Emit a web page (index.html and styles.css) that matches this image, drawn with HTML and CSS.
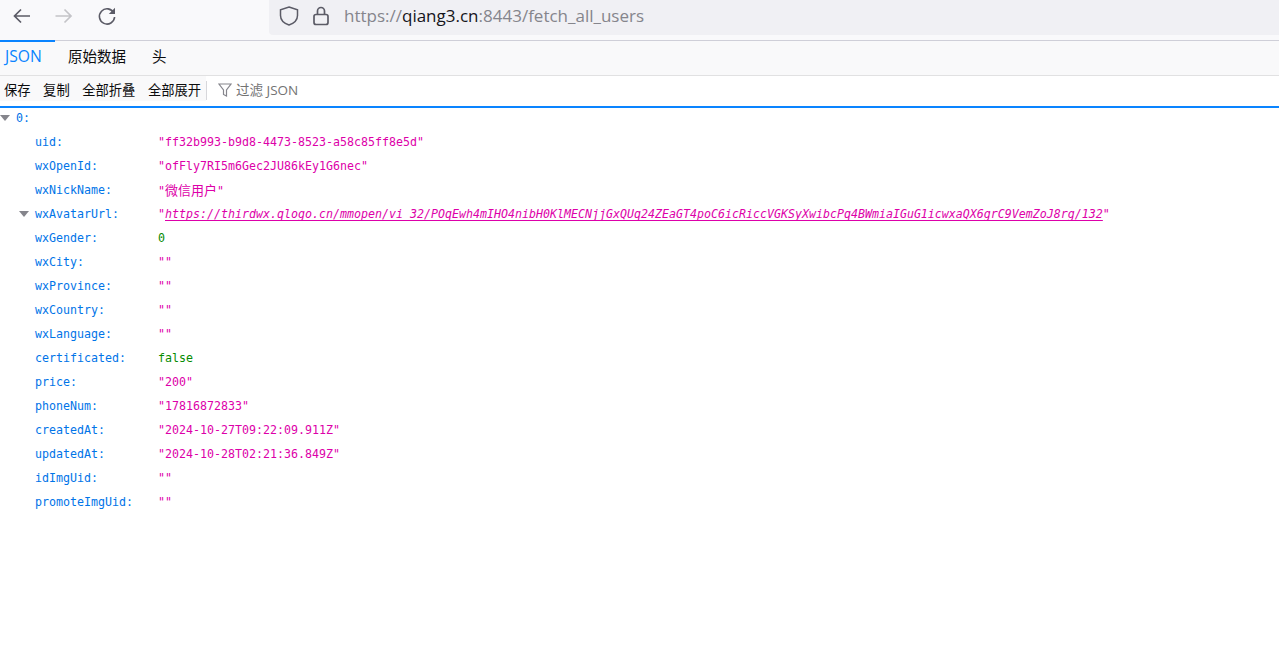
FILE: index.html
```html
<!DOCTYPE html>
<html lang="zh">
<head>
<meta charset="utf-8">
<title>fetch_all_users</title>
<link rel="stylesheet" href="styles.css">
</head>
<body>
<header class="browser-bar">
  <div class="nav-buttons">
    <svg class="nav-icon" viewBox="0 0 20 20"><path d="M19 10H3.500M10 3.500 3.500 10l6.500 6.500" fill="none" stroke="#5b5b66" stroke-width="1.700"/></svg>
    <svg class="nav-icon" viewBox="0 0 20 20"><path d="M1.500 10H17M10.500 3.500 17 10l-6.500 6.500" fill="none" stroke="#c4c4c8" stroke-width="1.700"/></svg>
    <svg class="nav-icon" viewBox="0 0 20 20"><path d="M16.800 7A7.600 7.600 0 1 0 17.600 11" fill="none" stroke="#5b5b66" stroke-width="1.600"/><path d="M18 1.800V8h-6.200z" fill="#5b5b66"/></svg>
  </div>
  <div class="url-bar">
    <svg class="shield" viewBox="0 0 20 20"><path d="M10 1 18.500 3.800v5.700c0 4.500-3.500 7.800-8.500 9.500-5-1.700-8.500-5-8.500-9.500V3.800z" fill="none" stroke="#5b5b66" stroke-width="1.500"/></svg>
    <svg class="lock" viewBox="0 0 16 20"><path d="M4.500 9V5a3.500 3.500 0 0 1 7 0v4" fill="none" stroke="#5b5b66" stroke-width="1.700"/><rect x="1" y="8.500" width="14" height="10" rx="2" fill="none" stroke="#5b5b66" stroke-width="1.700"/></svg>
    <span class="url"><span class="url-dim">https://</span><span class="url-host">qiang3.cn</span><span class="url-dim">:8443/fetch_all_users</span></span>
  </div>
</header>
<nav class="tabs">
  <span class="tab tab-active">JSON</span>
  <span class="tab">原始数据</span>
  <span class="tab">头</span>
</nav>
<div class="toolbar">
  <div class="tool-buttons">
    <span>保存</span><span>复制</span><span>全部折叠</span><span>全部展开</span>
  </div>
  <span class="tool-sep"></span>
  <svg class="filter-icon" viewBox="0 0 14 14"><path d="M1 1h12L8.500 7v6l-3-1.500V7z" fill="none" stroke="#85858c" stroke-width="1.200"/></svg>
  <span class="filter-text">过滤 JSON</span>
</div>
<main class="json">
  <div class="row row-top"><span class="twisty"></span><span class="key">0:</span></div>
  <div class="row"><span class="key cell">uid:</span><span class="str">"ff32b993-b9d8-4473-8523-a58c85ff8e5d"</span></div>
  <div class="row"><span class="key cell">wxOpenId:</span><span class="str">"ofFly7RI5m6Gec2JU86kEy1G6nec"</span></div>
  <div class="row"><span class="key cell">wxNickName:</span><span class="str">"<span class="cjk">微信用户</span>"</span></div>
  <div class="row"><span class="twisty twisty-inner"></span><span class="key cell">wxAvatarUrl:</span><span class="str">"<a class="link" href="#">https://thirdwx.qlogo.cn/mmopen/vi_32/POqEwh4mIHO4nibH0KlMECNjjGxQUq24ZEaGT4poC6icRiccVGKSyXwibcPq4BWmiaIGuG1icwxaQX6grC9VemZoJ8rg/132</a>"</span></div>
  <div class="row"><span class="key cell">wxGender:</span><span class="lit">0</span></div>
  <div class="row"><span class="key cell">wxCity:</span><span class="str">""</span></div>
  <div class="row"><span class="key cell">wxProvince:</span><span class="str">""</span></div>
  <div class="row"><span class="key cell">wxCountry:</span><span class="str">""</span></div>
  <div class="row"><span class="key cell">wxLanguage:</span><span class="str">""</span></div>
  <div class="row"><span class="key cell">certificated:</span><span class="lit">false</span></div>
  <div class="row"><span class="key cell">price:</span><span class="str">"200"</span></div>
  <div class="row"><span class="key cell">phoneNum:</span><span class="str">"17816872833"</span></div>
  <div class="row"><span class="key cell">createdAt:</span><span class="str">"2024-10-27T09:22:09.911Z"</span></div>
  <div class="row"><span class="key cell">updatedAt:</span><span class="str">"2024-10-28T02:21:36.849Z"</span></div>
  <div class="row"><span class="key cell">idImgUid:</span><span class="str">""</span></div>
  <div class="row"><span class="key cell">promoteImgUid:</span><span class="str">""</span></div>
</main>
</body>
</html>
```
FILE: styles.css
```css
* { box-sizing: border-box; }
html, body { margin: 0; height: 100%; background: #fff; overflow: hidden; }
body { font-family: "Open Sans", "Noto Sans CJK SC", sans-serif; }

.browser-bar {
  height: 41px;
  background: #f9f9fb;
  border-bottom: 1px solid #cfcfd8;
  display: flex;
  align-items: flex-start;
}
.nav-buttons {
  width: 269px;
  height: 32px;
  display: flex;
  align-items: center;
  gap: 23px;
  padding-left: 11px;
}
.nav-icon { width: 20px; height: 20px; flex: none; }
.url-bar {
  flex: 1;
  height: 35px;
  background: #f0f0f4;
  border-bottom-left-radius: 4px;
  display: flex;
  align-items: center;
  padding: 0 0 3px 10px;
}
.shield { width: 20px; height: 20px; flex: none; }
.lock { width: 16px; height: 20px; flex: none; margin-left: 14px; }
.url {
  margin: 0 0 2px 15px;
  font-family: "Open Sans", sans-serif;
  font-size: 17px;
  white-space: nowrap;
}
.url-dim { color: #85858c; }
.url-host { color: #15141a; }

.tabs {
  height: 35px;
  background: #f9f9fa;
  border-bottom: 1px solid #e1e1e2;
  display: flex;
  font-size: 14.500px;
  color: #0c0c0d;
}
.tab {
  padding: 0 5px;
  margin-right: 16px;
  line-height: 29px;
  border-top: 2px solid transparent;
  margin-top: -1px;
  height: 35px;
}
.tab-active {
  color: #0a84ff;
  border-top-color: #0a84ff;
  width: 55px;
  margin-right: 8px;
  font-size: 15.700px;
}

.toolbar {
  height: 32px;
  background: #fff;
  border-bottom: 2px solid #0a84ff;
  display: flex;
  align-items: flex-start;
  font-size: 13.300px;
  line-height: 22px;
  color: #0c0c0d;
}
.tool-buttons {
  display: flex;
  gap: 12.500px;
  padding: 3px 5px 0 4px;
  background: #f9f9fa;
  height: 25px;
}
.tool-sep { width: 1px; height: 19px; margin-top: 5px; background: #d7d7db; }
.filter-icon { width: 14px; height: 14px; margin: 7px 0 0 11px; flex: none; }
.filter-text { margin: 3px 0 0 4px; color: #737373; font-size: 13.500px; }

.json {
  font-family: "DejaVu Sans Mono", "Noto Sans CJK SC", monospace;
  font-size: 11.630px;
}
.row {
  height: 24px;
  line-height: 24px;
  display: flex;
  padding-left: 35px;
  position: relative;
  white-space: pre;
}
.row-top { padding-left: 16px; height: 22px; line-height: 20px; }
.cell { width: 123px; flex: none; }
.key { color: #0074e8; }
.str { color: #dd00a9; }
.cjk { font-size: 13px; font-family: "Noto Sans CJK SC", sans-serif; }
.lit { color: #058b00; }
.link { color: #dd00a9; font-style: italic; text-decoration: underline; text-underline-offset: 2px; }
.twisty {
  position: absolute;
  left: 0;
  top: 7px;
  width: 0;
  height: 0;
  border-left: 5px solid transparent;
  border-right: 5px solid transparent;
  border-top: 6px solid #85858c;
}
.twisty-inner { left: 19px; top: 9px; }
```
